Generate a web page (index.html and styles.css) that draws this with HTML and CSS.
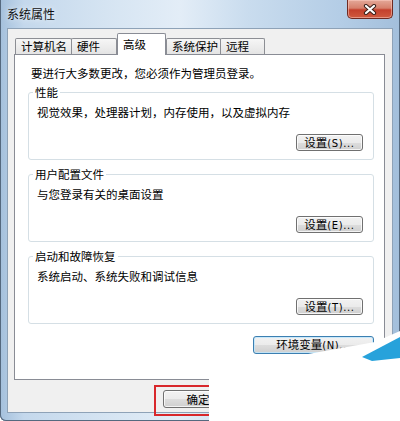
FILE: index.html
```html
<!DOCTYPE html>
<html lang="zh-CN">
<head>
<meta charset="utf-8">
<title>系统属性</title>
<link rel="stylesheet" href="styles.css">
</head>
<body>
<div class="window">
  <div class="titlebar">
    <span class="title">系统属性</span>
    <button class="close" aria-label="关闭">
      <svg width="14" height="11" viewBox="0 0 14 11">
        <path d="M3 2 L11 9 M11 2 L3 9" stroke="#3b2019" stroke-width="4.2" stroke-linecap="round"/>
        <path d="M3 2 L11 9 M11 2 L3 9" stroke="#ffffff" stroke-width="2.2" stroke-linecap="round"/>
      </svg>
    </button>
  </div>
  <div class="client">
    <div class="tabs">
      <div class="tab tab-name">计算机名</div>
      <div class="tab tab-hw">硬件</div>
      <div class="tab tab-adv selected">高级</div>
      <div class="tab tab-prot">系统保护</div>
      <div class="tab tab-remote">远程</div>
    </div>
    <div class="panel">
      <p class="intro">要进行大多数更改，您必须作为管理员登录。</p>
      <div class="group">
        <span class="group-title">性能</span>
        <span class="group-desc">视觉效果，处理器计划，内存使用，以及虚拟内存</span>
        <button class="btn btn-set">设置<span class="key">(S)...</span></button>
      </div>
      <div class="group">
        <span class="group-title">用户配置文件</span>
        <span class="group-desc">与您登录有关的桌面设置</span>
        <button class="btn btn-set">设置<span class="key">(E)...</span></button>
      </div>
      <div class="group">
        <span class="group-title">启动和故障恢复</span>
        <span class="group-desc">系统启动、系统失败和调试信息</span>
        <button class="btn btn-set">设置<span class="key">(T)...</span></button>
      </div>
      <button class="btn btn-env">环境变量<span class="key">(N)...</span></button>
    </div>
    <div class="actions">
      <button class="btn btn-dlg">确定</button>
      <button class="btn btn-dlg">取消</button>
      <button class="btn btn-dlg">应用<span class="key">(A)</span></button>
    </div>
  </div>
  <div class="highlight"></div>
  <div class="mask"></div>
  <svg class="arrow" width="40" height="34" viewBox="0 0 40 34">
    <polygon points="2,27 40,7 40,28 12,31" fill="#27a2db"/>
  </svg>
</div>
</body>
</html>
```

FILE: styles.css
```css
* { box-sizing: border-box; }
html, body { margin: 0; padding: 0; }
body {
  width: 400px;
  height: 421px;
  overflow: hidden;
  background: #ffffff;
  font-family: "Noto Sans CJK SC", "Microsoft YaHei", sans-serif;
  font-size: 11.5px;
  color: #000;
}

.window {
  position: relative;
  width: 400px;
  height: 421px;
  padding: 0 7px 8px 7px;
  display: flex;
  flex-direction: column;
  border-radius: 0 0 6px 6px;
  background: linear-gradient(90deg, #a4c0dc 0%, #c4d8ec 6%, #d8e6f3 30%, #e3edf7 45%, #c9dcee 62%, #b4cde6 85%, #a3bfdb 100%);
  box-shadow: inset 1px 0 0 #55697f, inset -1px 0 0 #55697f, inset 0 -1px 0 #55697f;
}

.titlebar {
  position: relative;
  height: 28px;
  display: flex;
  align-items: center;
  flex-shrink: 0;
}
.title {
  font-size: 12px;
  line-height: 14px;
  color: #111;
  text-shadow: 0 0 6px rgba(255,255,255,0.9);
}
.close {
  position: absolute;
  top: 0;
  right: 0;
  width: 46px;
  height: 19px;
  padding: 0;
  border: 1px solid #6e2a22;
  border-top: none;
  border-radius: 0 0 5px 5px;
  background: linear-gradient(#e4a898 0%, #d6806c 45%, #c4402c 55%, #cf5a3f 100%);
  box-shadow: inset 0 0 0 1px rgba(255,210,200,0.5);
  display: flex;
  align-items: center;
  justify-content: center;
}

.client {
  flex: 1;
  display: flex;
  flex-direction: column;
  background: #f0f0f0;
  border: 1px solid #8ea2b7;
  padding: 4px 7px 0 6px;
}

.tabs {
  display: flex;
  align-items: flex-end;
  height: 22px;
  margin-left: 1px;
  margin-bottom: -1px;
  position: relative;
  z-index: 1;
}
.tab {
  height: 16px;
  margin-bottom: 1px;
  padding-left: 5px;
  line-height: 15px;
  white-space: nowrap;
  border: 1px solid #8c8e94;
  border-bottom: none;
  border-radius: 2px 2px 0 0;
  background: linear-gradient(#f6f6f6, #e4e4e4);
}
.tab-name { width: 57px; }
.tab-hw { width: 46px; margin-left: -1px; }
.tab-adv { width: 49px; }
.tab-prot { width: 55px; }
.tab-remote { width: 45px; margin-left: -1px; }
.tab.selected {
  height: 22px;
  margin-bottom: 0;
  line-height: 20px;
  background: #ffffff;
  border-color: #898c95;
}

.panel {
  height: 326px;
  flex-shrink: 0;
  display: flex;
  flex-direction: column;
  background: #ffffff;
  border: 1px solid #898c95;
  padding: 10px 10px 0 13px;
}
.intro {
  margin: 0;
  line-height: 16px;
  padding-left: 3px;
}

.group {
  height: 68px;
  margin-top: 11px;
  display: flex;
  flex-direction: column;
  border: 1px solid #d5dfe5;
  border-radius: 3px;
  padding: 0 10px 8px 6px;
}
.group + .group { margin-top: 14px; }
.group-title {
  align-self: flex-start;
  margin: -8px 0 0 -2px;
  padding: 0 2px;
  line-height: 14px;
  background: #ffffff;
}
.group-desc {
  margin-top: 6px;
  padding-left: 2px;
  line-height: 14px;
}

.btn {
  font-family: inherit;
  font-size: 11.5px;
  color: #000;
  padding: 0;
  line-height: 15px;
  border: 1px solid #707070;
  border-radius: 3px;
  background: linear-gradient(#f2f2f2 0%, #ebebeb 50%, #dddddd 51%, #cfcfcf 100%);
  box-shadow: inset 0 0 0 1px rgba(255,255,255,0.75);
  white-space: nowrap;
}
.key { letter-spacing: 0.6px; font-family: "DejaVu Sans", sans-serif; font-size: 10px; }
.btn-set {
  margin-top: auto;
  align-self: flex-end;
  width: 67px;
  height: 17px;
}
.btn-env {
  margin-top: 12px;
  align-self: flex-end;
  width: 121px;
  height: 18px;
  border-color: #3c7fb1;
  box-shadow: inset 0 0 0 1px rgba(190,230,253,0.8);
}

.actions {
  display: flex;
  justify-content: flex-end;
  gap: 6px;
  padding-top: 10px;
}
.btn-dlg {
  width: 70px;
  height: 18px;
}

.highlight {
  position: absolute;
  left: 154px;
  top: 385px;
  width: 100px;
  height: 31px;
  border: 2px solid #d8272b;
  z-index: 2;
}
.mask {
  position: absolute;
  inset: 0;
  background: #ffffff;
  clip-path: polygon(209px 358px, 297px 356px, 375px 342px, 400px 331px, 400px 421px, 209px 421px);
  z-index: 3;
}
.arrow {
  position: absolute;
  left: 360px;
  top: 330px;
  z-index: 4;
}
```
